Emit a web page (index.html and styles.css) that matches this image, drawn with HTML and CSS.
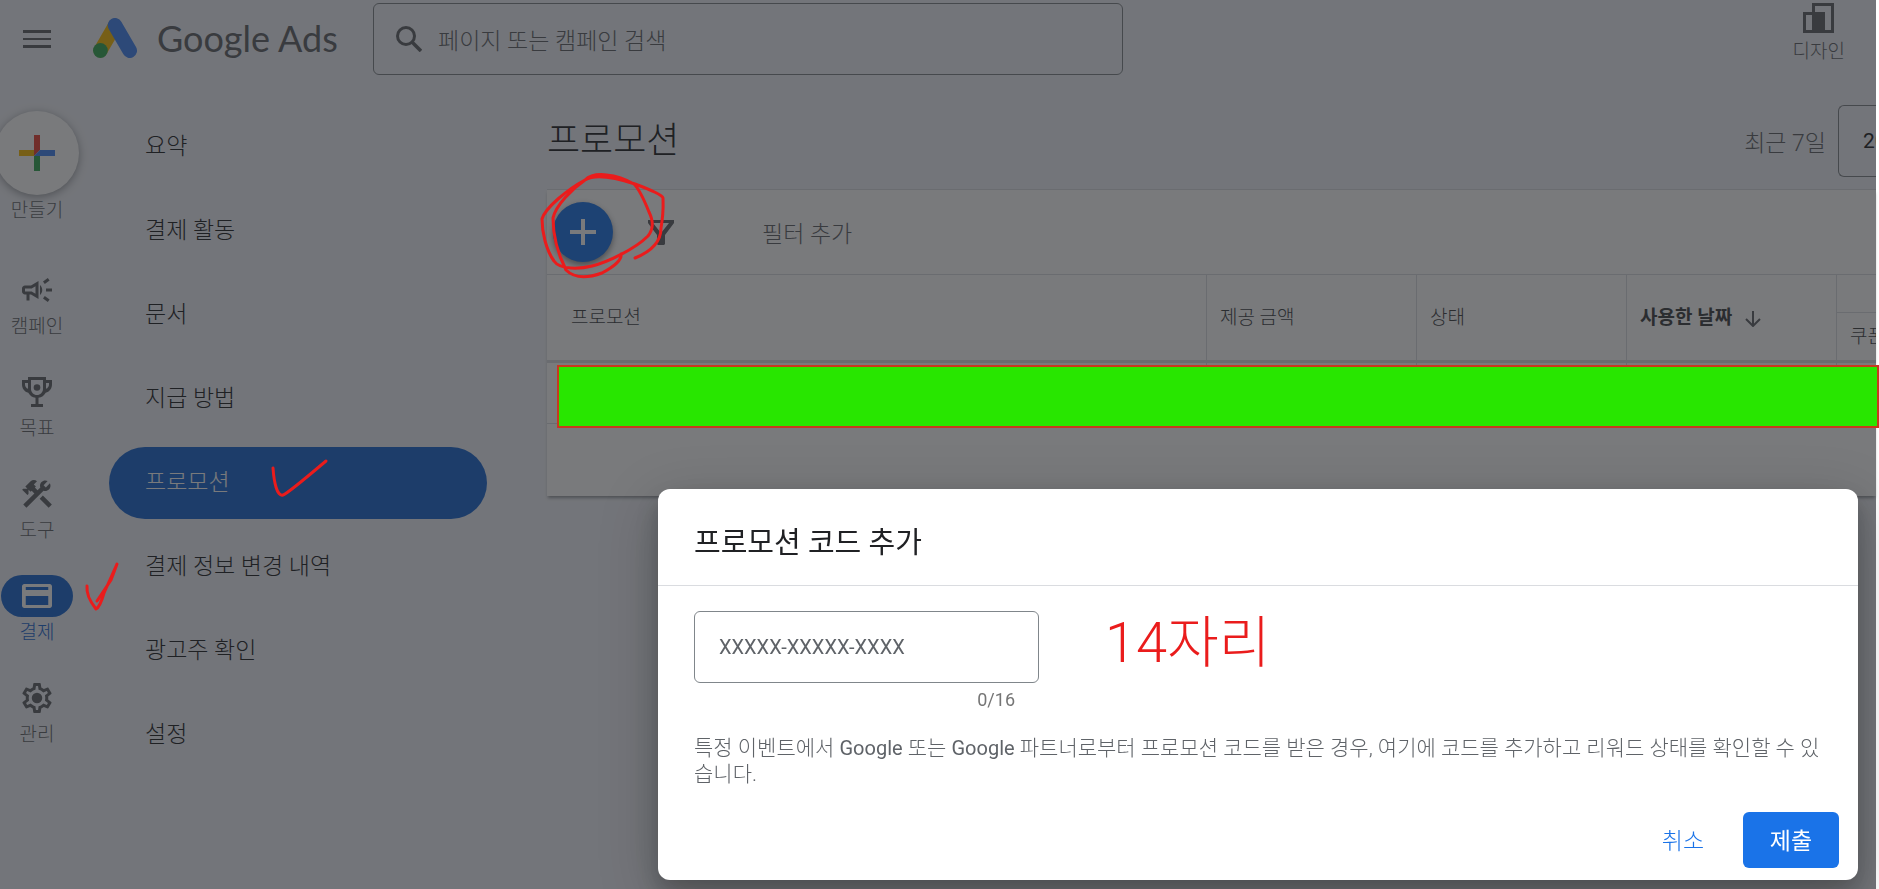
FILE: index.html
```
<!DOCTYPE html>
<html lang="ko">
<head>
  <meta charset="UTF-8" />
  <meta name="viewport" content="width=device-width, initial-scale=1.0"/>
  <title>프로모션 - Google Ads</title>
  <link rel="stylesheet" href="styles.css">
</head>
<body>

  <div class="app">
    <!-- Top bar -->
    <header class="topbar">
      <button class="icon-btn menu-btn" aria-label="메뉴">
        <svg width="28" height="18" viewBox="0 0 28 18"><path d="M0 0h28v3H0zM0 8h28v2H0zM0 15h28v3H0z"/></svg>
      </button>
      <a class="logo" href="#">
        <svg width="44" height="40" viewBox="0 0 44 40">
          <path d="M7.500 32.500L22 7.500" stroke="#fbbc04" stroke-width="14" stroke-linecap="round"/>
          <path d="M22 7.300l14.700 25.400" stroke="#4285f4" stroke-width="14.600" stroke-linecap="round"/>
          <circle cx="7.400" cy="32.500" r="7.400" fill="#34a853"/>
        </svg>
        <span>Google Ads</span>
      </a>
      <label class="search">
        <svg width="26" height="26" viewBox="0 0 26 26"><circle cx="10" cy="10" r="8.500" fill="none" stroke="#5f6368" stroke-width="3"/><path d="M16 16l9 9" stroke="#5f6368" stroke-width="3.600"/></svg>
        <input type="text" placeholder="페이지 또는 캠페인 검색" aria-label="검색">
      </label>
      <button class="icon-btn design-btn">
        <svg width="31" height="30" viewBox="0 0 31 30"><path d="M9 0h22v30H0V9h9zM12 3v6h10v18h6V3zM3 12v15h6V12z" fill-rule="evenodd"/></svg>
        <span>디자인</span>
      </button>
    </header>

    <div class="layout">
      <!-- Icon rail -->
      <nav class="rail">
        <button class="create">
          <span class="create-circle">
            <svg width="36" height="36" viewBox="0 0 36 36">
              <path d="M15 0h6v15l-6 6z" fill="#ea4335"/>
              <path d="M0 15h15v6H0z" fill="#fbbc04"/>
              <path d="M15 21h6v15h-6z" fill="#34a853"/>
              <path d="M21 15h15v6H15z" fill="#4285f4"/>
            </svg>
          </span>
          <span>만들기</span>
        </button>
        <a class="rail-item" href="#">
          <span class="rail-icon"><svg viewBox="0 0 24 24"><path d="M18 11v2h4v-2h-4zm-2 6.610c.96.71 2.210 1.650 3.200 2.390.4-.53.8-1.070 1.200-1.600-.99-.74-2.240-1.680-3.200-2.400-.4.54-.8 1.080-1.200 1.610zM20.400 5.600c-.4-.53-.8-1.070-1.200-1.600-.99.74-2.240 1.680-3.200 2.400.4.53.8 1.070 1.200 1.600.96-.72 2.210-1.650 3.200-2.400zM4 9c-1.100 0-2 .9-2 2v2c0 1.100.9 2 2 2h1v4h2v-4h1l5 3V6L8 9H4zm5.030 1.710L11 9.530v4.940l-1.970-1.180-.48-.29H4v-2h4.550l.48-.29zM15.500 12c0-1.330-.58-2.530-1.500-3.350v6.690c.92-.81 1.500-2.010 1.500-3.340z"/></svg></span>
          <span>캠페인</span>
        </a>
        <a class="rail-item" href="#">
          <span class="rail-icon"><svg viewBox="0 0 24 24"><path d="M6 2h12v2h4v3c0 2.700-1.700 4.900-4.200 5.500-.9 1.800-2.700 3.100-4.800 3.400V20h3v2H8v-2h3v-4.100c-2.100-.3-3.900-1.600-4.800-3.400C3.700 11.900 2 9.700 2 7V4h4zM8 4v6c0 2.200 1.800 4 4 4s4-1.800 4-4V4zM4 6v1c0 1.300.8 2.400 2 2.900V6zM18 6v3.900c1.200-.5 2-1.600 2-2.900V6z" fill-rule="evenodd"/><circle cx="12" cy="9" r="2.200"/></svg></span>
          <span>목표</span>
        </a>
        <a class="rail-item" href="#">
          <span class="rail-icon"><svg viewBox="0 0 24 24"><path d="M13.783 15.172l2.121-2.121 5.996 5.996-2.121 2.121zM17.500 10c1.930 0 3.500-1.570 3.500-3.500 0-.58-.16-1.120-.41-1.600l-2.700 2.700-1.490-1.490 2.700-2.700c-.48-.25-1.020-.41-1.600-.41C15.570 3 14 4.570 14 6.500c0 .41.08.8.21 1.160l-1.850 1.850-1.780-1.780.71-.71-1.410-1.410L12 3.490c-1.170-1.170-3.070-1.170-4.240 0L4.220 7.030l1.410 1.410H2.810l-.71.71 3.540 3.540.71-.71V9.150l1.410 1.410.71-.71 1.780 1.780-7.410 7.410 2.120 2.120L16.340 9.790c.36.13.75.21 1.160.21z"/></svg></span>
          <span>도구</span>
        </a>
        <a class="rail-item active" href="#">
          <span class="rail-icon"><svg viewBox="0 0 24 24"><path d="M3.500 4h17c.8 0 1.500.7 1.500 1.500v13c0 .8-.7 1.500-1.500 1.500h-17c-.8 0-1.500-.7-1.500-1.500v-13C2 4.700 2.700 4 3.500 4zM4.500 6v2h15V6zM4.500 12v6h15v-6z" fill-rule="evenodd"/></svg></span>
          <span>결제</span>
        </a>
        <a class="rail-item" href="#">
          <span class="rail-icon"><svg viewBox="0 0 24 24"><path d="M19.430 12.980c.04-.32.07-.64.07-.98 0-.34-.03-.66-.07-.98l2.110-1.650c.19-.15.24-.42.12-.64l-2-3.460c-.09-.16-.26-.25-.44-.25-.06 0-.12.01-.17.03l-2.490 1c-.52-.4-1.080-.73-1.690-.98l-.38-2.650C14.460 2.180 14.250 2 14 2h-4c-.25 0-.46.18-.49.42l-.38 2.650c-.61.25-1.170.59-1.690.98l-2.490-1c-.06-.02-.12-.03-.18-.03-.17 0-.34.09-.43.25l-2 3.460c-.13.22-.07.49.12.64l2.110 1.650c-.04.32-.07.65-.07.98 0 .33.03.66.07.98l-2.110 1.650c-.19.15-.24.42-.12.64l2 3.460c.09.16.26.25.44.25.06 0 .12-.01.17-.03l2.490-1c.52.4 1.080.73 1.690.98l.38 2.650c.03.24.24.42.49.42h4c.25 0 .46-.18.49-.42l.38-2.650c.61-.25 1.170-.59 1.690-.98l2.490 1c.06.02.12.03.18.03.17 0 .34-.09.43-.25l2-3.460c.12-.22.07-.49-.12-.64l-2.110-1.650zm-1.980-1.710c.04.31.05.52.05.73 0 .21-.02.43-.05.73l-.14 1.130.89.7 1.080.84-.7 1.210-1.270-.51-1.040-.42-.9.68c-.43.32-.84.56-1.250.73l-1.060.43-.16 1.130-.2 1.350h-1.400l-.19-1.350-.16-1.130-1.060-.43c-.43-.18-.83-.41-1.230-.71l-.91-.7-1.060.43-1.270.51-.7-1.210 1.080-.84.89-.7-.14-1.130c-.03-.31-.05-.54-.05-.74s.02-.43.05-.73l.14-1.130-.89-.7-1.080-.84.7-1.210 1.270.51 1.040.42.9-.68c.43-.32.84-.56 1.250-.73l1.060-.43.16-1.130.2-1.350h1.390l.19 1.350.16 1.130 1.060.43c.43.18.83.41 1.230.71l.91.7 1.060-.43 1.270-.51.7 1.210-1.070.85-.89.7.14 1.130z"/><circle cx="12" cy="12" r="3.500"/></svg></span>
          <span>관리</span>
        </a>
      </nav>

      <!-- Billing menu -->
      <nav class="side-menu">
        <a href="#">요약</a>
        <a href="#">결제 활동</a>
        <a href="#">문서</a>
        <a href="#">지급 방법</a>
        <a class="active" href="#">프로모션</a>
        <a href="#">결제 정보 변경 내역</a>
        <a href="#">광고주 확인</a>
        <a href="#">설정</a>
      </nav>

      <main class="content">
        <div class="page-head">
          <h1>프로모션</h1>
          <span class="range-label">최근 7일</span>
          <button class="range-btn">20</button>
        </div>

        <section class="card">
          <div class="toolbar">
            <button class="add-btn" aria-label="프로모션 코드 추가">
              <svg width="26" height="26" viewBox="0 0 26 26"><path d="M11 0h4v11h11v4H15v11h-4V15H0v-4h11z" fill="#fff"/></svg>
            </button>
            <svg class="filter-icon" width="26" height="25" viewBox="0 0 26 25"><path d="M0 0h26v3L17 15v9l-1 1h-6l-1-1v-9L0 3zM5 3l8 10 8-10z" fill="#5f6368" fill-rule="evenodd"/></svg>
            <button class="filter-btn">필터 추가</button>
          </div>
          <table class="promo-table">
            <colgroup><col><col class="col-mid"><col class="col-mid"><col class="col-mid"><col class="col-last"></colgroup>
            <thead>
              <tr>
                <th rowspan="2" class="first">프로모션</th>
                <th rowspan="2">제공 금액</th>
                <th rowspan="2">상태</th>
                <th rowspan="2" class="sorted">사용한 날짜
                  <svg width="16" height="16" viewBox="0 0 16 16"><path d="M8 0v15M1 8l7 7 7-7" fill="none" stroke="#5f6368" stroke-width="2"/></svg>
                </th>
                <th class="group"></th>
              </tr>
              <tr><th class="sub">쿠폰</th></tr>
            </thead>
            <tbody>
              <tr><td></td><td></td><td></td><td></td><td></td></tr>
            </tbody>
          </table>
          <div class="masked-row"></div>
        </section>
      </main>
    </div>
  </div>

  <!-- Promotion code dialog -->
  <div class="overlay">
    <form class="dialog" role="dialog" aria-labelledby="dialog-title">
      <h2 id="dialog-title">프로모션 코드 추가</h2>
      <div class="dialog-body">
        <div class="code-row">
          <div class="code-field">
            <input type="text" id="promo-code" placeholder="XXXXX-XXXXX-XXXX" maxlength="16" aria-label="프로모션 코드">
            <span class="counter">0/16</span>
          </div>
          <span class="note">14자리</span>
        </div>
        <p>특정 이벤트에서 <span class="brand">Google</span> 또는 <span class="brand">Google</span> 파트너로부터 프로모션 코드를 받은 경우, 여기에 코드를 추가하고 리워드 상태를 확인할 수 있습니다.</p>
      </div>
      <div class="dialog-actions">
        <button type="button" class="cancel-btn">취소</button>
        <button type="button" class="submit-btn">제출</button>
      </div>
    </form>
  </div>

  <!-- Red pen marks -->
  <svg class="pen" width="680" height="620" viewBox="0 0 680 620">
    <path d="M635 258C655 250 661 238 661 228C664 210 663 206 663 198Q662 194 635 184Q598 172 585 180C568 189 545 208 542 219C542 232 546 250 554 261C560 270 580 269 592 266C608 262 635 249 648 236Q656 226 649 212C645 202 640 190 634 184C617 174 594 171 585 180C572 189 556 205 553 218C553 235 557 252 566 270C576 280 591 277 602 273C613 267 622 261 621 254"/>
    <path d="M273 468C274 482 277 497 283 495Q287 494 326 461"/>
    <path d="M87 586C86 596 92 604 96 609Q100 607 104 593L117 564L111 580L97 601"/>
  </svg>

</body>
</html>
```
FILE: styles.css
```
* {
  box-sizing: border-box;
}

body {
  margin: 0;
  background-color: #fff;
  color: #202124;
  font-family: Roboto, 'Noto Sans CJK KR', sans-serif;
  font-size: 23px;
  font-weight: 300;
  overflow: hidden;
}

button,
input {
  font: inherit;
  color: inherit;
}

button {
  padding: 0;
  border: none;
  background: none;
  cursor: pointer;
}

a {
  color: inherit;
  text-decoration: none;
}

svg {
  display: block;
  flex-shrink: 0;
}

.app {
  min-height: 100vh;
  margin-right: 3px;
  background-color: #f1f3f9;
}

/* Top bar */
.topbar {
  display: flex;
  align-items: flex-start;
  height: 105px;
  padding: 3px 31px 0 23px;
}

.icon-btn {
  color: #5f6368;
  fill: #5f6368;
}

.menu-btn {
  margin-top: 27px;
}

.logo {
  display: flex;
  align-items: center;
  gap: 20px;
  width: 280px;
  margin-left: 42px;
  padding-top: 15px;
  color: #5f6368;
  fill: none;
  font-family: Lato, sans-serif;
  font-size: 36px;
  font-weight: 400;
  line-height: 40px;
  white-space: nowrap;
}

.search {
  display: flex;
  align-items: center;
  gap: 16px;
  width: 750px;
  height: 72px;
  padding: 0 22px;
  border: 1px solid #80868b;
  border-radius: 6px;
}

.search input {
  flex: 1;
  padding: 4px 0 0;
  border: none;
  outline: none;
  background: none;
}

input::placeholder {
  color: #5f6368;
  opacity: 1;
}

.design-btn {
  display: flex;
  flex-direction: column;
  align-items: center;
  gap: 4px;
  margin-left: auto;
  font-size: 19px;
  line-height: 30px;
}

.layout {
  display: flex;
  align-items: flex-start;
}

/* Icon rail */
.rail {
  display: flex;
  flex-direction: column;
  align-items: center;
  gap: 28px;
  width: 74px;
  padding-top: 6px;
  color: #5f6368;
  fill: #5f6368;
  font-size: 19px;
  line-height: 32px;
}

.create {
  display: flex;
  flex-direction: column;
  align-items: center;
  margin-bottom: 14px;
}

.create-circle {
  display: flex;
  align-items: center;
  justify-content: center;
  width: 84px;
  height: 84px;
  border-radius: 50%;
  background-color: #fff;
  box-shadow: 0 2px 8px rgba(60, 64, 67, 0.5);
}

.rail-item {
  display: flex;
  flex-direction: column;
  align-items: center;
}

.rail-icon {
  display: flex;
  align-items: center;
  justify-content: center;
  width: 72px;
  height: 42px;
  border-radius: 21px;
}

.rail-icon svg {
  width: 36px;
  height: 36px;
}

.rail-item.active {
  color: #1967d2;
}

.rail-item.active .rail-icon {
  background-color: #1967d2;
  fill: #fff;
}

/* Billing menu */
.side-menu {
  display: flex;
  flex-direction: column;
  gap: 12px;
  width: 378px;
  margin: 6px 60px 0 35px;
}

.side-menu a {
  height: 72px;
  padding-left: 36px;
  border-radius: 36px;
  line-height: 72px;
}

.side-menu .active {
  background-color: #1967d2;
  color: #fff;
}

/* Content */
.content {
  flex: 1;
  min-width: 0;
}

.page-head {
  display: flex;
  align-items: center;
  height: 72px;
  margin-bottom: 12px;
}

.page-head h1 {
  margin: 0 auto 8px 0;
  font-size: 36px;
  font-weight: 300;
}

.range-label {
  margin-right: 12px;
  color: #5f6368;
}

.range-btn {
  width: 38px;
  height: 72px;
  padding-left: 24px;
  border: 1px solid #80868b;
  border-right: none;
  border-radius: 6px 0 0 6px;
  font-size: 21px;
  font-weight: 400;
  text-align: left;
  overflow: hidden;
}

.card {
  position: relative;
  height: 307px;
  border-top: 1px solid #dadce0;
  background-color: #fff;
  box-shadow: 0 3px 3px -1px rgba(60, 64, 67, 0.5);
}

.toolbar {
  display: flex;
  align-items: center;
  height: 85px;
  padding-left: 6px;
  border-bottom: 1px solid #dadce0;
}

.add-btn {
  display: flex;
  align-items: center;
  justify-content: center;
  width: 60px;
  height: 60px;
  border-radius: 50%;
  background-color: #1a73e8;
  box-shadow: 0 3px 6px rgba(60, 64, 67, 0.6);
}

.filter-icon {
  margin-left: 35px;
}

.filter-btn {
  margin-left: 88px;
  color: #5f6368;
}

.promo-table {
  width: 100%;
  border-collapse: separate;
  border-spacing: 0;
  table-layout: fixed;
}

.col-mid {
  width: 210px;
}

.col-last {
  width: 40px;
}

.promo-table th {
  padding: 0 0 4px 13px;
  border-bottom: 3px solid #dadce0;
  border-left: 1px solid #dadce0;
  color: #3c4043;
  font-size: 19px;
  font-weight: 300;
  text-align: left;
  white-space: nowrap;
  overflow: hidden;
}

.promo-table .first {
  padding-left: 24px;
  border-left: none;
}

.promo-table .sorted {
  color: #3c4043;
  font-weight: 700;
}

.sorted svg {
  display: inline-block;
  margin-left: 8px;
  vertical-align: middle;
}

.promo-table .group {
  height: 38px;
  border-bottom-width: 1px;
}

.promo-table .sub {
  height: 50px;
}

.promo-table td {
  height: 61px;
  border-bottom: 1px solid #dadce0;
  border-left: 1px solid #dadce0;
}

.promo-table td:first-child {
  border-left: none;
}

.masked-row {
  position: absolute;
  z-index: 2;
  top: 175px;
  right: -3px;
  left: 10px;
  height: 63px;
  border: 2px solid #c8391f;
  background-color: #28e600;
}

/* Dialog */
.overlay {
  position: fixed;
  z-index: 1;
  inset: 0 3px 0 0;
  display: flex;
  align-items: flex-end;
  justify-content: flex-end;
  padding: 0 18px 9px;
  background-color: rgba(32, 33, 36, 0.6);
}

.dialog {
  width: 1200px;
  max-width: 100%;
  border-radius: 12px;
  background-color: #fff;
  box-shadow: 0 16px 57px 4px rgba(0, 0, 0, 0.2), 0 12px 22px rgba(0, 0, 0, 0.2);
}

.dialog h2 {
  margin: 0;
  padding: 32px 36px 20px;
  border-bottom: 1px solid #dadce0;
  font-size: 29px;
  font-weight: 400;
  line-height: 44px;
}

.dialog-body {
  padding: 25px 36px 0;
}

.code-row {
  display: flex;
  gap: 66px;
}

.code-field {
  display: flex;
  flex-direction: column;
  width: 345px;
}

.code-field input {
  height: 72px;
  padding: 0 24px;
  border: 1px solid #80868b;
  border-radius: 6px;
  font-size: 20px;
  font-weight: 400;
}

.counter {
  padding-right: 24px;
  color: #757575;
  font-size: 18px;
  font-weight: 400;
  line-height: 34px;
  text-align: right;
}

.note {
  color: #ea1c1c;
  font-size: 56px;
  line-height: 64px;
}

.dialog-body p {
  margin: 18px 0 0;
  color: #5f6368;
  font-size: 21px;
  line-height: 26px;
}

.brand {
  font-size: 20px;
  font-weight: 400;
}

.dialog-actions {
  display: flex;
  justify-content: flex-end;
  gap: 12px;
  padding: 25px 19px 12px;
}

.cancel-btn,
.submit-btn {
  width: 96px;
  height: 56px;
  padding-bottom: 2px;
  border-radius: 6px;
  font-size: 23px;
  font-weight: 400;
}

.cancel-btn {
  color: #1a73e8;
  font-weight: 300;
}

.submit-btn {
  background-color: #1a73e8;
  color: #fff;
}

/* Pen marks lie over the whole page */
.pen {
  position: absolute;
  z-index: 3;
  top: 0;
  left: 0;
  fill: none;
  stroke: #ea1c1c;
  stroke-width: 3;
  stroke-linecap: round;
  stroke-linejoin: round;
  pointer-events: none;
}
```
